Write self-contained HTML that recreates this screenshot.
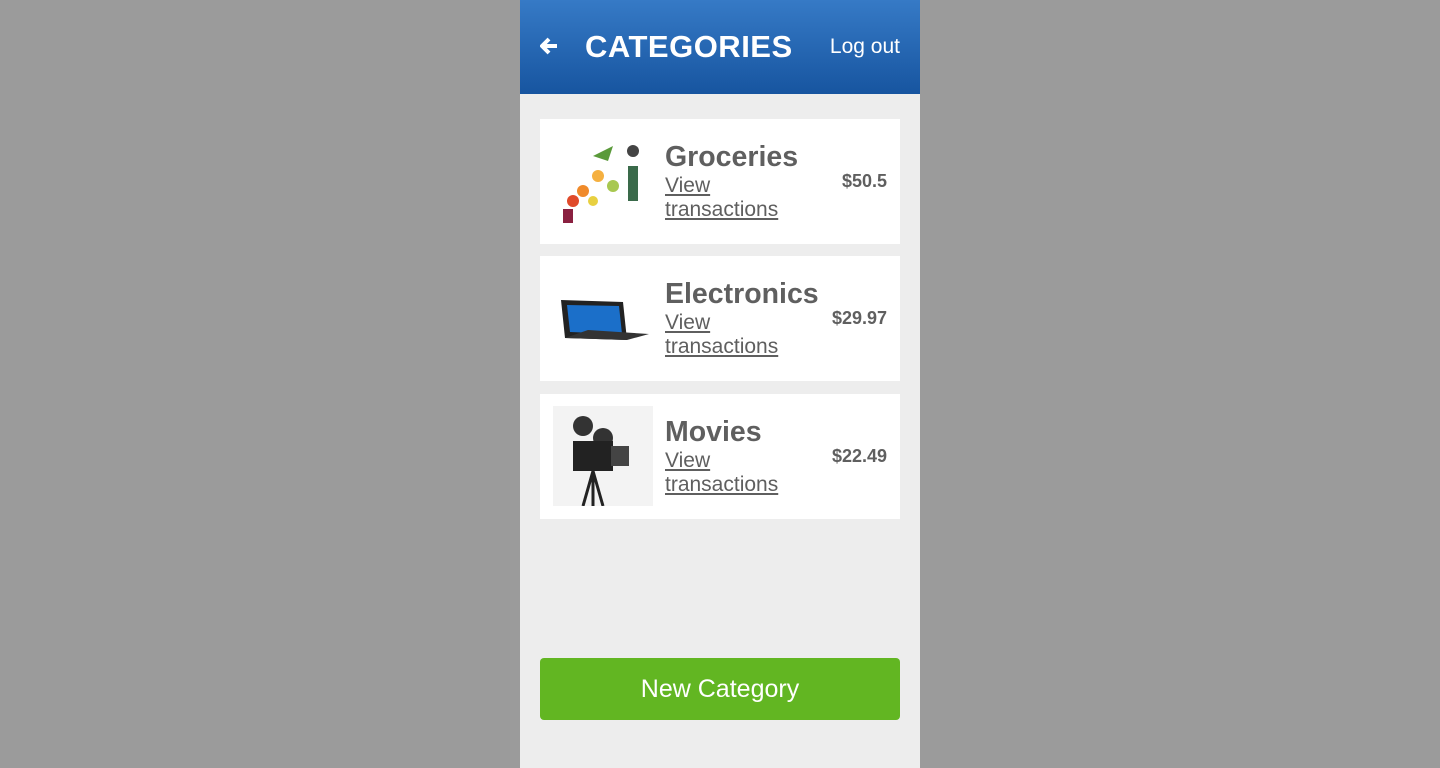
<!DOCTYPE html>
<html><head><meta charset="utf-8"><style>
*{margin:0;padding:0;box-sizing:border-box}
body{width:1440px;height:768px;background:#9b9b9b;font-family:"Liberation Sans",sans-serif;position:relative;overflow:hidden}
.app{position:absolute;left:520px;top:0;width:400px;height:768px;background:#ededed}
.hdr{height:94px;background:linear-gradient(#367ac6,#1755a0);position:relative;color:#fff}
.back{position:absolute;left:20px;top:37px}
.title{position:absolute;left:65px;top:29px;font-size:31px;font-weight:bold;letter-spacing:0.5px}
.logout{position:absolute;right:20px;top:35px;font-size:21px}
.card{position:absolute;left:20px;width:360px;height:125px;background:#fff;color:#5f5f5f}
.img{position:absolute;left:13px;top:12px;width:100px;height:100px}
.name{position:absolute;left:125px;top:22px;font-size:28.5px;font-weight:bold}
.link{position:absolute;left:125px;top:55px;font-size:21px;line-height:24px;text-decoration:underline}
.price{position:absolute;right:13px;top:52px;font-size:18px;font-weight:bold}
.btn{position:absolute;left:20px;top:658px;width:360px;height:62px;background:#62b622;border-radius:4px;color:#fff;font-size:25px;text-align:center;line-height:62px}
</style></head><body><div class="app">
<div class="hdr">
<svg class="back" width="18" height="18" viewBox="0 0 18 18"><path d="M9 2 L2 9 L9 16 M2 9 H17" stroke="#fff" stroke-width="4" fill="none" stroke-linejoin="round"/></svg>
<div class="title">CATEGORIES</div><div class="logout">Log out</div></div>
<div class="card" style="top:119px"><svg class="img" viewBox="0 0 100 100"><circle cx="20" cy="70" r="6" fill="#e04a2a"/><circle cx="30" cy="60" r="6" fill="#f08a2a"/><circle cx="45" cy="45" r="6" fill="#f5b040"/><circle cx="40" cy="70" r="5" fill="#e8d040"/><rect x="10" y="78" width="10" height="14" fill="#8a2040"/><path d="M40 25 L60 15 L55 30Z" fill="#5a9a3a"/><rect x="75" y="35" width="10" height="35" fill="#3a6a4a"/><circle cx="60" cy="55" r="6" fill="#a8c850"/><circle cx="80" cy="20" r="6" fill="#444"/></svg>
<div class="name">Groceries</div><div class="link">View<br>transactions</div><div class="price">$50.5</div></div>
<div class="card" style="top:256px"><svg class="img" viewBox="0 0 100 100"><path d="M8 32 L70 34 L74 72 L12 70Z" fill="#222"/><path d="M14 37 L66 38 L69 66 L17 64Z" fill="#1b6fc9"/><path d="M12 70 L74 72 L96 66 L35 62Z" fill="#333"/></svg>
<div class="name">Electronics</div><div class="link">View<br>transactions</div><div class="price">$29.97</div></div>
<div class="card" style="top:394px"><svg class="img" viewBox="0 0 100 100"><rect width="100" height="100" fill="#f3f3f3"/><circle cx="30" cy="20" r="10" fill="#333"/><circle cx="50" cy="32" r="10" fill="#333"/><rect x="20" y="35" width="40" height="30" fill="#222"/><rect x="58" y="40" width="18" height="20" fill="#444"/><path d="M40 65 L30 100 M40 65 L50 100 M40 65 L40 100" stroke="#222" stroke-width="3"/></svg>
<div class="name">Movies</div><div class="link">View<br>transactions</div><div class="price">$22.49</div></div>
<div class="btn">New Category</div>
</div></body></html>
